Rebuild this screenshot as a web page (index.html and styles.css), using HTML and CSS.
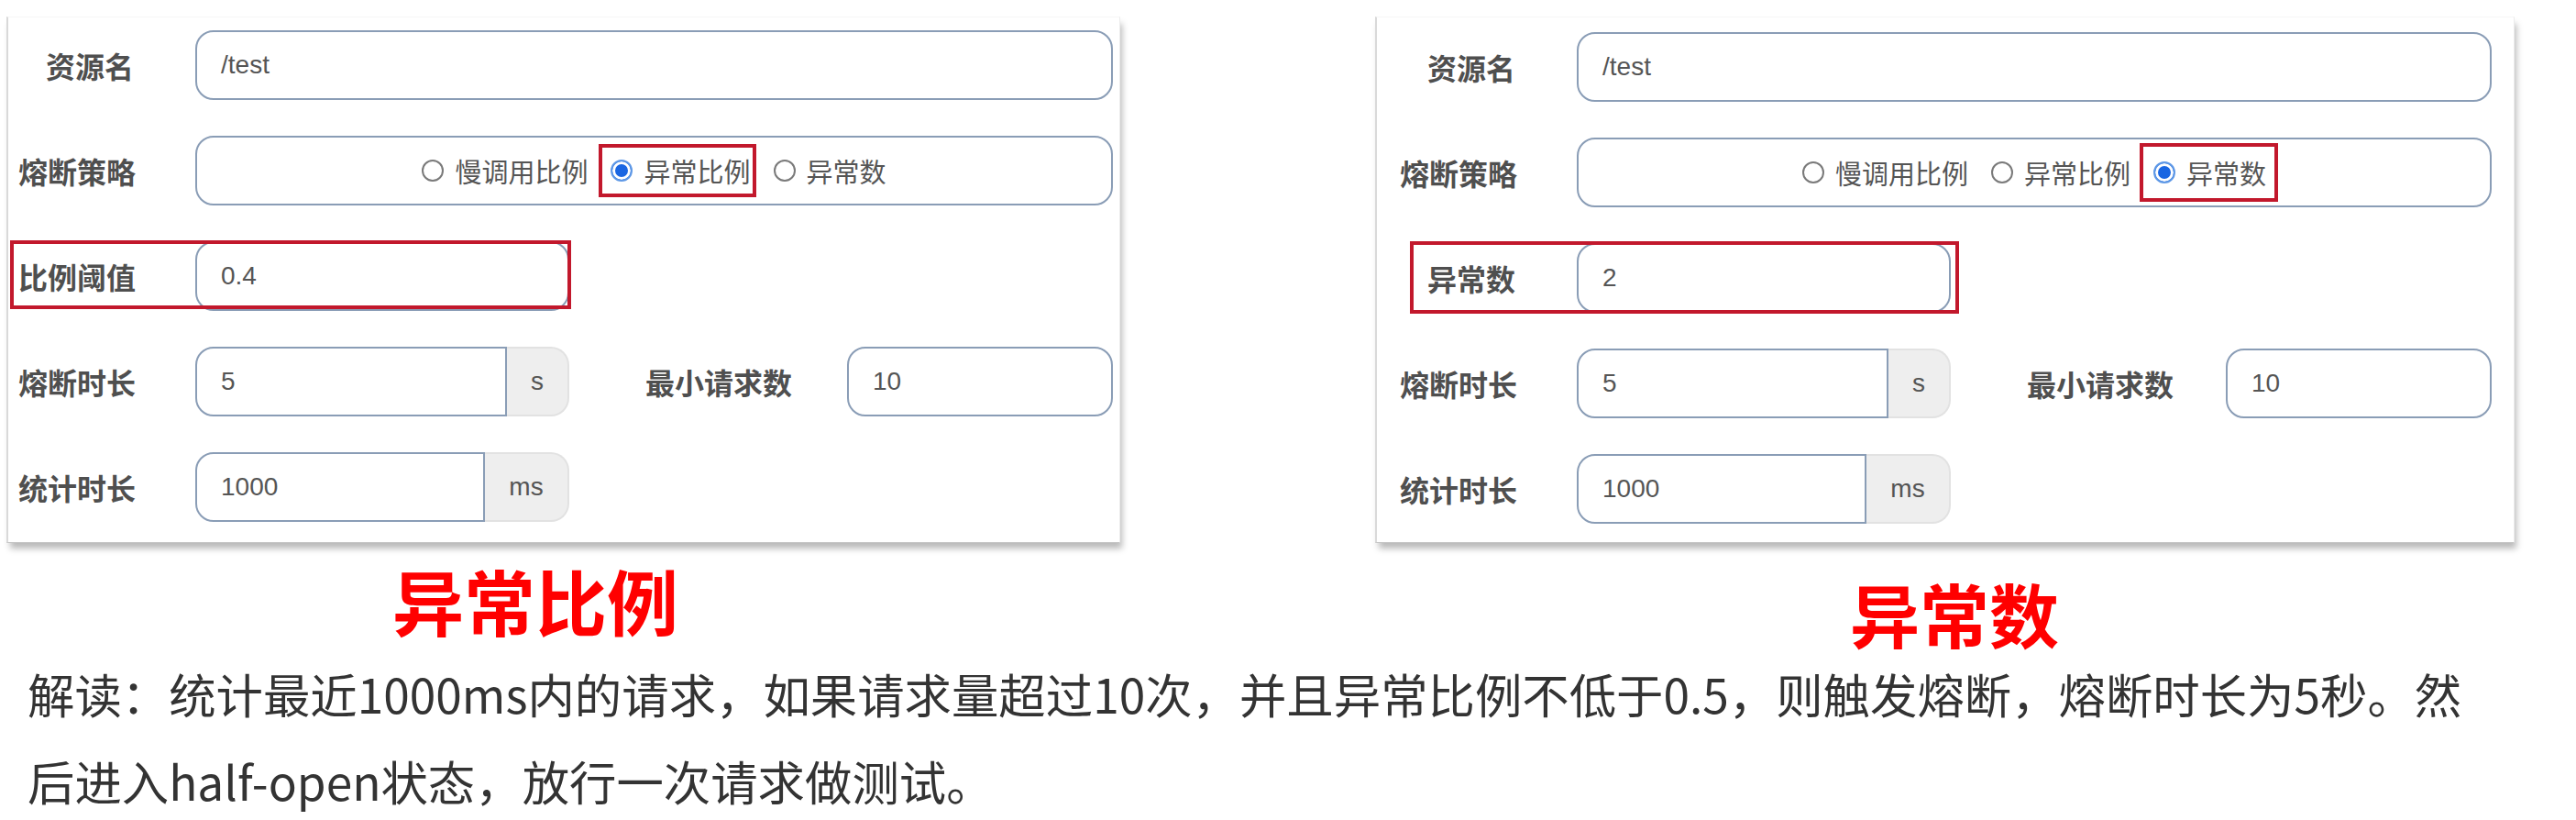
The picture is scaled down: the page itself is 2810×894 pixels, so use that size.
FILE: index.html
```html
<!DOCTYPE html>
<html lang="zh-CN">
<head>
<meta charset="utf-8">
<title>熔断策略</title>
<link rel="stylesheet" href="styles.css">
</head>
<body>
<div class="page">
  <div class="panels">
    <section class="panel panel-a">
      <div class="card card-a">
        <div class="form">
          <div class="row">
            <div class="label">资源名</div>
            <div class="input span">/test</div>
          </div>
          <div class="row">
            <div class="label">熔断策略</div>
            <div class="input span radios">
              <span class="radio"><i class="dot"></i>慢调用比例</span>
              <span class="radio marked marked-a"><i class="dot on"></i>异常比例</span>
              <span class="radio"><i class="dot"></i>异常数</span>
            </div>
          </div>
          <div class="row row-marked">
            <div class="label">比例阈值</div>
            <div class="input">0.4</div>
            <div class="mark mark-a"></div>
          </div>
          <div class="row">
            <div class="label">熔断时长</div>
            <div class="group">
              <div class="input">5</div>
              <div class="addon">s</div>
            </div>
            <div class="label label-mid">最小请求数</div>
            <div class="input">10</div>
          </div>
          <div class="row">
            <div class="label">统计时长</div>
            <div class="group">
              <div class="input">1000</div>
              <div class="addon addon-ms">ms</div>
            </div>
          </div>
        </div>
      </div>
      <div class="caption caption-a">异常比例</div>
    </section>

    <section class="panel panel-b">
      <div class="card card-b">
        <div class="form">
          <div class="row">
            <div class="label">资源名</div>
            <div class="input span">/test</div>
          </div>
          <div class="row">
            <div class="label">熔断策略</div>
            <div class="input span radios">
              <span class="radio"><i class="dot"></i>慢调用比例</span>
              <span class="radio"><i class="dot"></i>异常比例</span>
              <span class="radio marked marked-b"><i class="dot on"></i>异常数</span>
            </div>
          </div>
          <div class="row row-marked">
            <div class="label">异常数</div>
            <div class="input">2</div>
            <div class="mark mark-b"></div>
          </div>
          <div class="row">
            <div class="label">熔断时长</div>
            <div class="group">
              <div class="input">5</div>
              <div class="addon">s</div>
            </div>
            <div class="label label-mid">最小请求数</div>
            <div class="input">10</div>
          </div>
          <div class="row">
            <div class="label">统计时长</div>
            <div class="group">
              <div class="input">1000</div>
              <div class="addon addon-ms">ms</div>
            </div>
          </div>
        </div>
      </div>
      <div class="caption caption-b">异常数</div>
    </section>
  </div>
  <p class="explain">解读：统计最近1000ms内的请求，如果请求量超过10次，并且异常比例不低于0.5，则触发熔断，熔断时长为5秒。然<br>后进入half-open状态，放行一次请求做测试。</p>
</div>
</body>
</html>
```

FILE: styles.css
```css
* { box-sizing: border-box; }

html, body {
  margin: 0;
  padding: 0;
  background: #ffffff;
}

body {
  width: 2810px;
  height: 894px;
  overflow: hidden;
  font-family: "Noto Sans CJK SC", "Noto Sans", sans-serif;
}

.page {
  padding-top: 18px;
}

.panels {
  display: flex;
  align-items: flex-start;
}

.panel-a {
  margin-left: 7px;
  width: 1215px;
}

.panel-b {
  margin-left: 278px;
  width: 1243px;
}

.card {
  background: #ffffff;
  border: 1px solid #ececec;
  border-top-color: #f6f6f6;
  border-left: 2px solid #d9d9d9;
  border-bottom-color: #c4c4c4;
  box-shadow: 3px 7px 7px -1px rgba(0, 0, 0, 0.28);
}

.card-a {
  padding: 14px 7px 22px 11px;
}

.card-b {
  padding: 16px 24px 20px 25px;
}

.form {
  display: flex;
  flex-direction: column;
  gap: 39px;
}

.row {
  display: grid;
  grid-template-columns: 126px 408px minmax(0, 1fr) 290px;
  column-gap: 67px;
  height: 76px;
  align-items: center;
}

.label {
  font-family: "Noto Sans CJK SC", sans-serif;
  font-weight: 700;
  font-size: 32px;
  color: #4f4f4f;
  text-align: right;
  white-space: nowrap;
  line-height: 40px;
}

.label-mid {
  text-align: left;
  padding-left: 16px;
}

.input {
  height: 76px;
  align-self: stretch;
  display: flex;
  align-items: center;
  padding: 0 26px;
  border: 2px solid #8a9db6;
  border-radius: 20px;
  background: #ffffff;
  font-family: "Liberation Sans", Arial, sans-serif;
  font-size: 28px;
  color: #555555;
  white-space: nowrap;
}

.span {
  grid-column: 2 / 5;
}

.radios {
  justify-content: center;
  gap: 25px;
  padding: 0;
  font-family: "Noto Sans CJK SC", sans-serif;
  font-size: 29px;
}

.radio {
  display: flex;
  align-items: center;
  gap: 12px;
  line-height: 36px;
  color: #555555;
}

.dot {
  display: block;
  width: 24px;
  height: 24px;
  border-radius: 50%;
  border: 2px solid #7a7a7a;
  background: #ffffff;
  flex: none;
}

.dot.on {
  border: 2px solid #5e98e6;
  background: #1a66e2;
  box-shadow: inset 0 0 0 3px #ffffff;
}

.marked {
  border: 4px solid #c2182c;
}

.marked-a {
  padding: 7px 2px 7px 9px;
  margin: -11px -6px -11px -13px;
}

.marked-b {
  padding: 10px 9px 10px 11px;
  margin: -14px -13px -14px -15px;
}

.row-marked > .label { grid-area: 1 / 1; }
.row-marked > .input { grid-area: 1 / 2; }

.mark {
  grid-area: 1 / 1 / 2 / 3;
  align-self: stretch;
  border: 4px solid #c2182c;
  pointer-events: none;
}

.mark-a {
  margin: -1px -2px 2px -9px;
}

.mark-b {
  margin: -2px -9px -1px 11px;
}

.group {
  display: flex;
  align-self: stretch;
  height: 76px;
}

.group .input {
  flex: 1;
  border-radius: 20px 0 0 20px;
}

.addon {
  width: 68px;
  flex: none;
  display: flex;
  align-items: center;
  justify-content: center;
  background: #eeeeee;
  border: 2px solid #e2e2e2;
  border-left: none;
  border-radius: 0 20px 20px 0;
  font-family: "Liberation Sans", Arial, sans-serif;
  font-size: 28px;
  color: #555555;
}

.addon-ms {
  width: 92px;
}

.caption {
  font-family: "Noto Sans CJK SC", sans-serif;
  font-weight: 700;
  color: #ff0000;
  line-height: 1;
  white-space: nowrap;
}

.caption-a {
  font-size: 78px;
  margin: 23px 0 0 421px;
}

.caption-b {
  font-size: 76px;
  margin: 38px 0 0 518px;
}

.explain {
  margin: 2px 0 0 30px;
  font-family: "Noto Sans CJK SC", sans-serif;
  font-size: 51.4px;
  line-height: 95px;
  color: #333333;
  white-space: nowrap;
}
```
